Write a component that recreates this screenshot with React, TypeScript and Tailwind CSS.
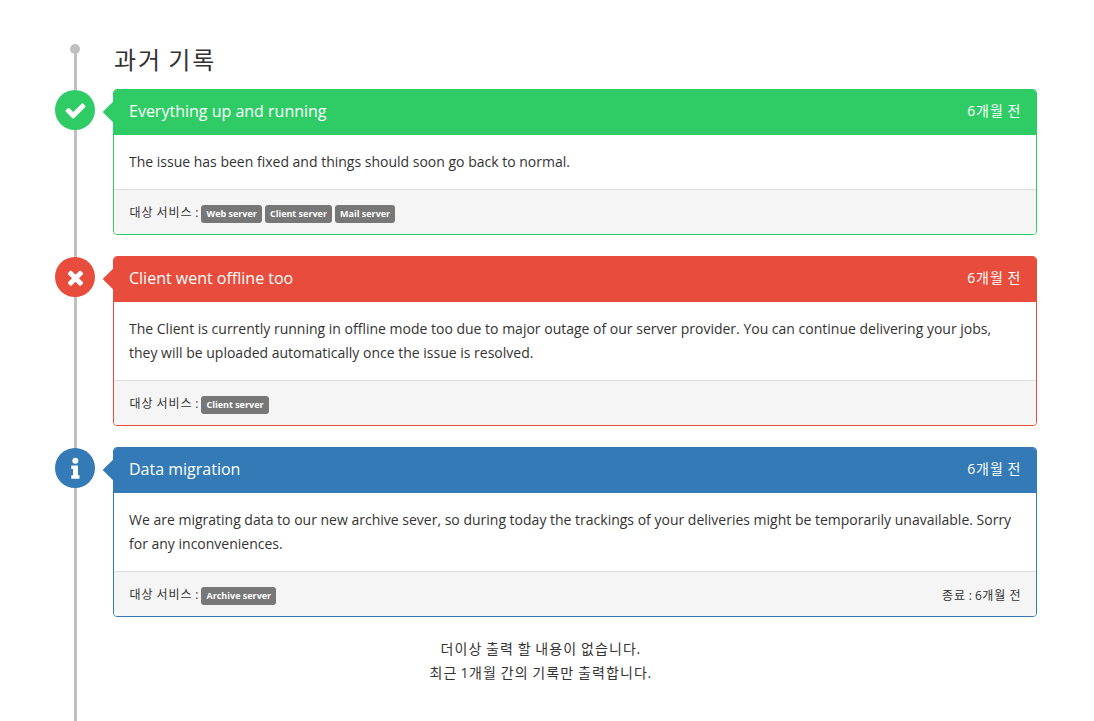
import React from "react";

const FONT = "font-['Open_Sans','Noto_Sans_CJK_KR',sans-serif]";

function K({ t }: { t: string }) {
  return (
    <>
      {t.split(/([가-힣]+)/).map((part, i) =>
        /[가-힣]/.test(part) ? (
          <span key={i} className="ml-[0.04em] mr-[-0.04em] tracking-[0.08em]">
            {part}
          </span>
        ) : (
          part
        )
      )}
    </>
  );
}

function Glyph({ d }: { d: string }) {
  return (
    <svg viewBox="0 0 1792 1792" width={23} height={23} fill="currentColor">
      <path d={d} />
    </svg>
  );
}

function InfoGlyph() {
  return (
    <svg viewBox="0 0 40 40" width={40} height={40} fill="currentColor">
      <circle cx="20.3" cy="12.8" r="3" />
      <path d="M16.3 17.4h6.7v9.8h1.5v3.6h-8.2v-3.6h1.7v-6.2h-1.7z" />
    </svg>
  );
}

const CHECK =
  "M1671 566q0 40-28 68l-724 724-136 136q-28 28-68 28t-68-28l-136-136-362-362q-28-28-28-68t28-68l136-136q28-28 68-28t68 28l294 295 656-657q28-28 68-28t68 28l136 136q28 28 28 68z";
const TIMES =
  "M1490 1322q0 40-28 68l-136 136q-28 28-68 28t-68-28l-294-294-294 294q-28 28-68 28t-68-28l-136-136q-28-28-28-68t28-68l294-294-294-294q-28-28-28-68t28-68l136-136q28-28 68-28t68 28l294 294 294-294q28-28 68-28t68 28l136 136q28 28 28 68t-28 68l-294 294 294 294q28 28 28 68z";

type CardProps = {
  title: string;
  icon: React.ReactNode;
  text: string;
  tags: string[];
  bg: string;
  border: string;
  end?: string;
};

function Card({ title, icon, text, tags, bg, border, end }: CardProps) {
  return (
    <div className="relative">
      <div className={`absolute left-[-58px] top-[1px] flex h-10 w-10 items-center justify-center rounded-full text-white ${bg}`}>
        {icon}
      </div>
      <div className={`absolute left-[-7px] top-[15px] h-4 w-4 rotate-45 ${bg}`} />
      <div className={`relative overflow-hidden rounded border ${border}`}>
        <div className={`flex h-[45px] items-start justify-between px-[15px] pt-[10px] text-white ${bg}`}>
          <h3 className="text-base leading-[22px]">{title}</h3>
          <span className="whitespace-nowrap text-sm leading-[22px]">
            <K t="6개월 전" />
          </span>
        </div>
        <div className="bg-white p-[15px] text-sm leading-6 text-[#333]">{text}</div>
        <div className="flex h-[45px] items-start justify-between border-t border-[#ddd] bg-[#f5f5f5] px-[15px] pt-[15px] text-xs leading-[18px] text-[#333]">
          <div className="flex items-start">
            <span className="mr-[3px] -mt-[1px] whitespace-nowrap">
              <K t="대상 서비스 :" />
            </span>
            {tags.map((t) => (
              <span
                key={t}
                className="mr-[3px] flex h-[18px] items-center rounded-[3px] bg-[#777] px-[5px] text-[9px] font-bold text-white"
              >
                {t}
              </span>
            ))}
          </div>
          {end && (
            <span className="whitespace-nowrap">
              <K t={end} />
            </span>
          )}
        </div>
      </div>
    </div>
  );
}

export default function App() {
  return (
    <div className={`relative h-[721px] overflow-hidden bg-white pl-[113px] pt-[40px] ${FONT}`}>
      <div className="absolute bottom-0 left-[74px] top-[48px] w-[3px] bg-[#c0c0c0]" />
      <div className="absolute left-[70px] top-[44px] h-[10px] w-[10px] rounded-full bg-[#c0c0c0]" />
      <div className="w-[924px]">
        <h2 className="mb-[9px] text-2xl leading-10 text-[#333]">
          <K t="과거 기록" />
        </h2>
        <div className="flex flex-col gap-[21px]">
          <Card
            title="Everything up and running"
            icon={<Glyph d={CHECK} />}
            text="The issue has been fixed and things should soon go back to normal."
            tags={["Web server", "Client server", "Mail server"]}
            bg="bg-[#2fcc66]"
            border="border-[#2fcc66]"
          />
          <Card
            title="Client went offline too"
            icon={<Glyph d={TIMES} />}
            text="The Client is currently running in offline mode too due to major outage of our server provider. You can continue delivering your jobs, they will be uploaded automatically once the issue is resolved."
            tags={["Client server"]}
            bg="bg-[#e74c3c]"
            border="border-[#e74c3c]"
          />
          <Card
            title="Data migration"
            icon={<InfoGlyph />}
            text="We are migrating data to our new archive sever, so during today the trackings of your deliveries might be temporarily unavailable. Sorry for any inconveniences."
            tags={["Archive server"]}
            bg="bg-[#337ab7]"
            border="border-[#337ab7]"
            end="종료 : 6개월 전"
          />
        </div>
        <div className="-ml-[70px] mt-5 w-[994px] text-center text-sm leading-6 text-[#333]">
          <p>
            <K t="더이상 출력 할 내용이 없습니다." />
          </p>
          <p>
            <K t="최근 1개월 간의 기록만 출력합니다." />
          </p>
        </div>
      </div>
    </div>
  );
}
